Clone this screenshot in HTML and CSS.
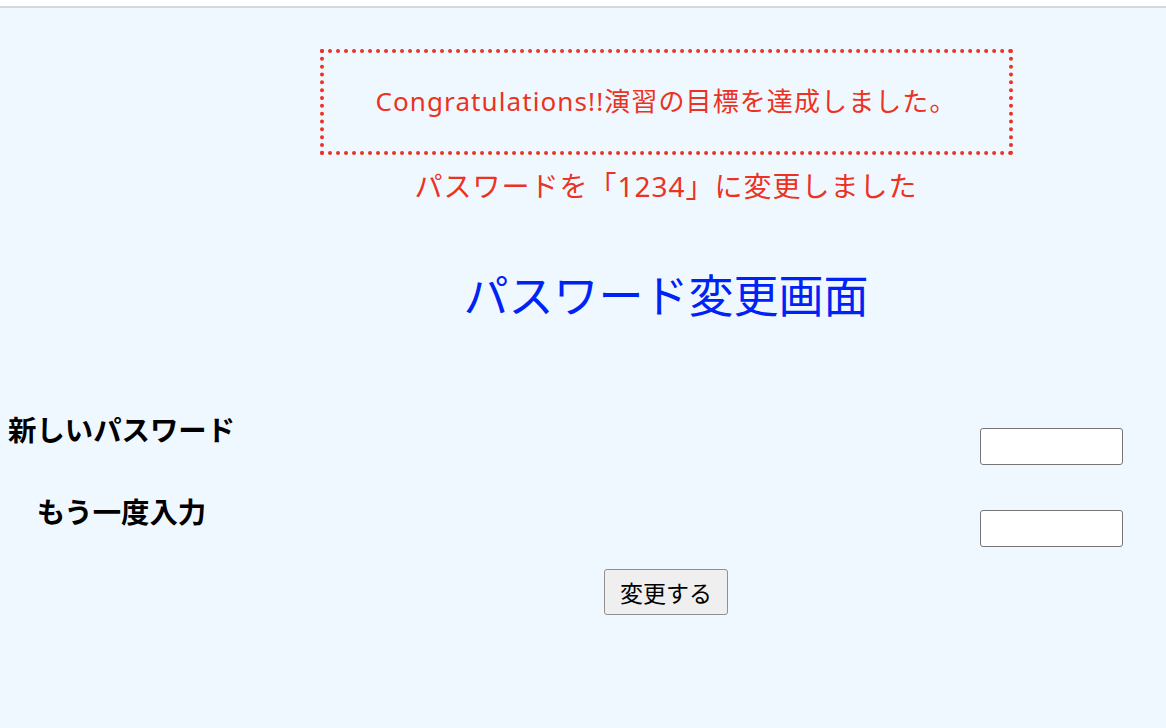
FILE: index.html
```html
<!DOCTYPE html>
<html lang="ja">
<head>
<meta charset="utf-8">
<title>パスワード変更画面</title>
<link rel="stylesheet" href="styles.css">
</head>
<body>
<div class="topbar"></div>
<main class="page">
  <section class="messages">
    <div class="goal-box">Congratulations!!演習の目標を達成しました。</div>
    <p class="notice">パスワードを「1234」に変更しました</p>
    <h1 class="title">パスワード変更画面</h1>
  </section>
  <form class="form">
    <div class="row">
      <label class="label">新しいパスワード</label>
      <input class="field" type="password">
    </div>
    <div class="row">
      <label class="label">もう一度入力</label>
      <input class="field" type="password">
    </div>
    <div class="actions">
      <button class="submit" type="button">変更する</button>
    </div>
  </form>
</main>
</body>
</html>
```

FILE: styles.css
```css
html, body {
  margin: 0;
  padding: 0;
  background: #f0f8ff;
  font-family: "Noto Sans", "Noto Sans CJK JP", sans-serif;
}

.topbar {
  height: 6px;
  background: #ffffff;
  border-bottom: 2px solid #d6d8da;
}

.page {
  min-height: 720px;
  background: #f0f8ff;
}

.messages {
  padding: 41px 0 0 166px;
  display: flex;
  flex-direction: column;
  align-items: center;
}

.goal-box {
  box-sizing: border-box;
  width: 693px;
  height: 106px;
  border: 4px dotted #eb3223;
  color: #eb3223;
  font-size: 26px;
  letter-spacing: 1.1px;
  display: flex;
  align-items: center;
  justify-content: center;
  padding: 0 0 4px 0;
}

.notice {
  margin: 11px 0 0;
  color: #eb3223;
  font-size: 28px;
  letter-spacing: 1px;
  line-height: 40px;
}

.title {
  margin: 58px 0 0;
  color: #0023f5;
  font-size: 45px;
  font-weight: 400;
  line-height: 64px;
}

.form {
  padding: 0 43px 0 8px;
  margin-top: 82px;
}

.row {
  display: flex;
  justify-content: space-between;
  align-items: flex-start;
  height: 82px;
}

.label {
  flex: 0 0 227px;
  white-space: nowrap;
  text-align: center;
  font-weight: 700;
  font-size: 28.4px;
  line-height: 40px;
  color: #000;
}

.field {
  box-sizing: border-box;
  width: 143px;
  height: 37px;
  margin-top: 18px;
  border: 1px solid #767676;
  border-radius: 3px;
  background: #fff;
}

.actions {
  display: flex;
  justify-content: center;
  margin: -5px -43px 0 -8px;
  padding-left: 166px;
}

.submit {
  box-sizing: border-box;
  width: 124px;
  height: 46px;
  font-family: "Noto Sans CJK JP", sans-serif;
  font-size: 23px;
  color: #000;
  background: #efefef;
  border: 1px solid #8f8f8f;
  border-radius: 3px;
  padding: 0;
}
```
